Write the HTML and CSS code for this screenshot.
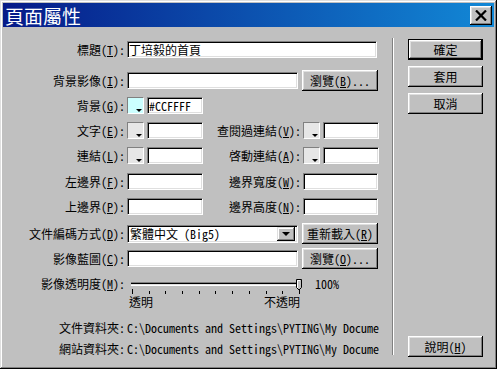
FILE: index.html
```html
<!DOCTYPE html>
<html lang="zh-Hant">
<head>
    <meta charset="UTF-8">
    <title>頁面屬性</title>
    <link rel="stylesheet" href="styles.css">
</head>
<body>
    <div class="window">
        <div class="titlebar">
            <span class="title">頁面屬性</span>
            <button class="close" type="button">
                <svg width="12" height="11" viewBox="0 0 12 11">
                    <path d="M1 0.5 L11 10.5 M11 0.5 L1 10.5" stroke="#000" stroke-width="2.2" fill="none"/>
                </svg>
            </button>
        </div>
        <div class="body">
            <div class="main">
                <div class="row first">
                    <span class="lbl">標題(<u>T</u>):</span>
                    <div class="field w250">丁培毅的首頁</div>
                </div>
                <div class="row">
                    <span class="lbl">背景影像(<u>I</u>):</span>
                    <div class="field w171"></div>
                    <button class="btn" type="button">瀏覽(<u>B</u>)...</button>
                </div>
                <div class="row">
                    <span class="lbl">背景(<u>G</u>):</span>
                    <span class="swatch cyan"></span>
                    <div class="field w56">#CCFFFF</div>
                </div>
                <div class="row">
                    <span class="lbl">文字(<u>E</u>):</span>
                    <span class="swatch"></span>
                    <div class="field w56"></div>
                    <span class="lbl2">查閱過連結(<u>V</u>):</span>
                    <span class="swatch"></span>
                    <div class="field w56"></div>
                </div>
                <div class="row">
                    <span class="lbl">連結(<u>L</u>):</span>
                    <span class="swatch"></span>
                    <div class="field w56"></div>
                    <span class="lbl2">啓動連結(<u>A</u>):</span>
                    <span class="swatch"></span>
                    <div class="field w56"></div>
                </div>
                <div class="row gap1">
                    <span class="lbl">左邊界(<u>F</u>):</span>
                    <div class="field w76"></div>
                    <span class="lbl2">邊界寬度(<u>W</u>):</span>
                    <div class="field w75"></div>
                </div>
                <div class="row">
                    <span class="lbl">上邊界(<u>P</u>):</span>
                    <div class="field w76"></div>
                    <span class="lbl2">邊界高度(<u>N</u>):</span>
                    <div class="field w75"></div>
                </div>
                <div class="row gap2">
                    <span class="lbl">文件編碼方式(<u>D</u>):</span>
                    <div class="field select w171">
                        <span>繁體中文 (Big5)</span>
                        <span class="drop"></span>
                    </div>
                    <button class="btn" type="button">重新載入(<u>R</u>)</button>
                </div>
                <div class="row">
                    <span class="lbl">影像藍圖(<u>C</u>):</span>
                    <div class="field w171"></div>
                    <button class="btn" type="button">瀏覽(<u>O</u>)...</button>
                </div>
                <div class="slider-row">
                    <span class="lbl">影像透明度(<u>M</u>):</span>
                    <svg class="slider" width="180" height="22" viewBox="0 0 180 22">
                        <rect x="4" y="9" width="170" height="1" fill="#808080"/>
                        <rect x="4" y="10" width="170" height="1" fill="#000"/>
                        <rect x="4" y="11" width="170" height="1" fill="#dfdfdf"/>
                        <rect x="4" y="12" width="170" height="1" fill="#fff"/>
                        <g fill="#000">
                            <rect x="5" y="16" width="1" height="5"/>
                            <rect x="22" y="18" width="1" height="3"/>
                            <rect x="38" y="18" width="1" height="3"/>
                            <rect x="55" y="18" width="1" height="3"/>
                            <rect x="72" y="18" width="1" height="3"/>
                            <rect x="88" y="18" width="1" height="3"/>
                            <rect x="105" y="18" width="1" height="3"/>
                            <rect x="122" y="18" width="1" height="3"/>
                            <rect x="139" y="18" width="1" height="3"/>
                            <rect x="155" y="18" width="1" height="3"/>
                            <rect x="172" y="16" width="1" height="5"/>
                        </g>
                        <path d="M169.5 6.5 H174.5 V14.5 L172 17 L169.5 14.5 Z" fill="#c0c0c0" stroke="#000" stroke-width="1"/>
                        <path d="M170.5 15 V7.5 H173" fill="none" stroke="#fff" stroke-width="1"/>
                    </svg>
                    <span class="pct">100%</span>
                </div>
                <div class="scale">
                    <span>透明</span>
                    <span>不透明</span>
                </div>
                <div class="info">
                    <div class="info-row">
                        <span class="lbl">文件資料夾:</span>
                        <span class="path">C:\Documents and Settings\PYTING\My Docume</span>
                    </div>
                    <div class="info-row">
                        <span class="lbl">網站資料夾:</span>
                        <span class="path">C:\Documents and Settings\PYTING\My Docume</span>
                    </div>
                </div>
            </div>
            <div class="sep"></div>
            <div class="side">
                <button class="sbtn default" type="button">確定</button>
                <button class="sbtn" type="button">套用</button>
                <button class="sbtn" type="button">取消</button>
                <button class="sbtn help" type="button">說明(<u>H</u>)</button>
            </div>
        </div>
    </div>
</body>
</html>
```

FILE: styles.css
```css
html, body {
    margin: 0;
    padding: 0;
}
body {
    background: #c0c0c0;
    font-family: "Noto Sans Mono CJK TC", "Noto Sans CJK TC", sans-serif;
    font-size: 12px;
    line-height: 1;
    color: #000;
}
.window {
    width: 497px;
    height: 369px;
    box-sizing: border-box;
    padding: 3px;
    display: flex;
    flex-direction: column;
    background: #c0c0c0;
    box-shadow: inset -1px -1px #000, inset 1px 1px #dfdfdf,
                inset -2px -2px #808080, inset 2px 2px #fff;
}
.titlebar {
    height: 24px;
    display: flex;
    align-items: center;
    justify-content: space-between;
    padding: 0 2px;
    background: linear-gradient(to right, #061a88, #1288d6);
}
.title {
    color: #fff;
    font-family: "Noto Sans CJK TC", sans-serif;
    font-size: 19px;
    line-height: 1;
}
.close {
    width: 22px;
    height: 19px;
    padding: 0;
    border: 0;
    margin-top: 1px;
    display: flex;
    align-items: center;
    justify-content: center;
    background: #c0c0c0;
    box-shadow: inset -1px -1px #000, inset 1px 1px #fff,
                inset -2px -2px #808080, inset 2px 2px #dfdfdf;
}
.body {
    flex: 1;
    display: flex;
}
.main {
    width: 389px;
    padding-top: 10px;
}
.row {
    display: flex;
    align-items: center;
    height: 25px;
}
.row.first {
    margin-bottom: 6px;
}
.row.gap1 {
    margin-top: 1px;
}
.row.gap2 {
    margin-top: 2px;
}
.lbl {
    width: 122px;
    margin-right: 2px;
    text-align: right;
    white-space: nowrap;
}
.lbl2 {
    width: 98px;
    margin-right: 2px;
    text-align: right;
    white-space: nowrap;
}
u {
    text-underline-offset: 1px;
}
.field {
    height: 17px;
    box-sizing: border-box;
    padding: 0 1px;
    background: #fff;
    border: 1px solid;
    border-color: #808080 #fff #fff #808080;
    box-shadow: inset 1px 1px #000, inset -1px -1px #dfdfdf;
    line-height: 15px;
    white-space: nowrap;
    overflow: hidden;
}
.w250 { width: 250px; }
.w171 { width: 171px; }
.w76 { width: 76px; }
.w75 { width: 75px; }
.w56 { width: 56px; }
.select {
    height: 18px;
    display: flex;
    align-items: center;
    justify-content: space-between;
    padding: 0 2px 0 2px;
}
.drop {
    width: 18px;
    height: 14px;
    box-sizing: border-box;
    background: #c0c0c0;
    box-shadow: inset -1px -1px #000, inset 1px 1px #dfdfdf,
                inset -2px -2px #808080, inset 2px 2px #fff;
    position: relative;
}
.drop::after {
    content: "";
    position: absolute;
    left: 5px;
    top: 5px;
    border-left: 4px solid transparent;
    border-right: 4px solid transparent;
    border-top: 4px solid #000;
}
.btn, .sbtn {
    height: 21px;
    padding: 0;
    border: 0;
    box-sizing: border-box;
    background: #c0c0c0;
    font: inherit;
    color: #000;
    box-shadow: inset -1px -1px #000, inset 1px 1px #fff,
                inset -2px -2px #808080, inset 2px 2px #dfdfdf;
}
.btn {
    width: 76px;
    margin-left: 4px;
}
.swatch {
    width: 17px;
    height: 17px;
    box-sizing: border-box;
    margin-right: 3px;
    border: 1px solid;
    border-color: #808080 #fff #fff #808080;
    background: #e6e6e6;
    position: relative;
}
.swatch.cyan {
    background: #ccffff;
}
.swatch::after {
    content: "";
    position: absolute;
    right: 1px;
    bottom: 1px;
    border-left: 3px solid transparent;
    border-right: 3px solid transparent;
    border-top: 3px solid #000;
}
.slider-row {
    display: flex;
    align-items: center;
    height: 22px;
    margin-top: 2px;
}
.slider {
    display: block;
}
.pct {
    margin-left: 8px;
}
.scale {
    display: flex;
    justify-content: space-between;
    width: 171px;
    height: 13px;
    margin-left: 126px;
    line-height: 13px;
}
.info {
    margin-top: 9px;
}
.info-row {
    display: flex;
    align-items: center;
    height: 21px;
}
.path {
    white-space: nowrap;
}
.sep {
    width: 0;
    margin: 11px 0;
    border-left: 1px solid #808080;
    border-right: 1px solid #fff;
}
.side {
    width: 100px;
    box-sizing: border-box;
    padding: 12px 0 9px 14px;
    display: flex;
    flex-direction: column;
}
.sbtn {
    width: 75px;
    margin-bottom: 6px;
}
.sbtn.default {
    border: 1px solid #000;
}
.sbtn.help {
    margin-top: auto;
    margin-bottom: 0;
}
```
